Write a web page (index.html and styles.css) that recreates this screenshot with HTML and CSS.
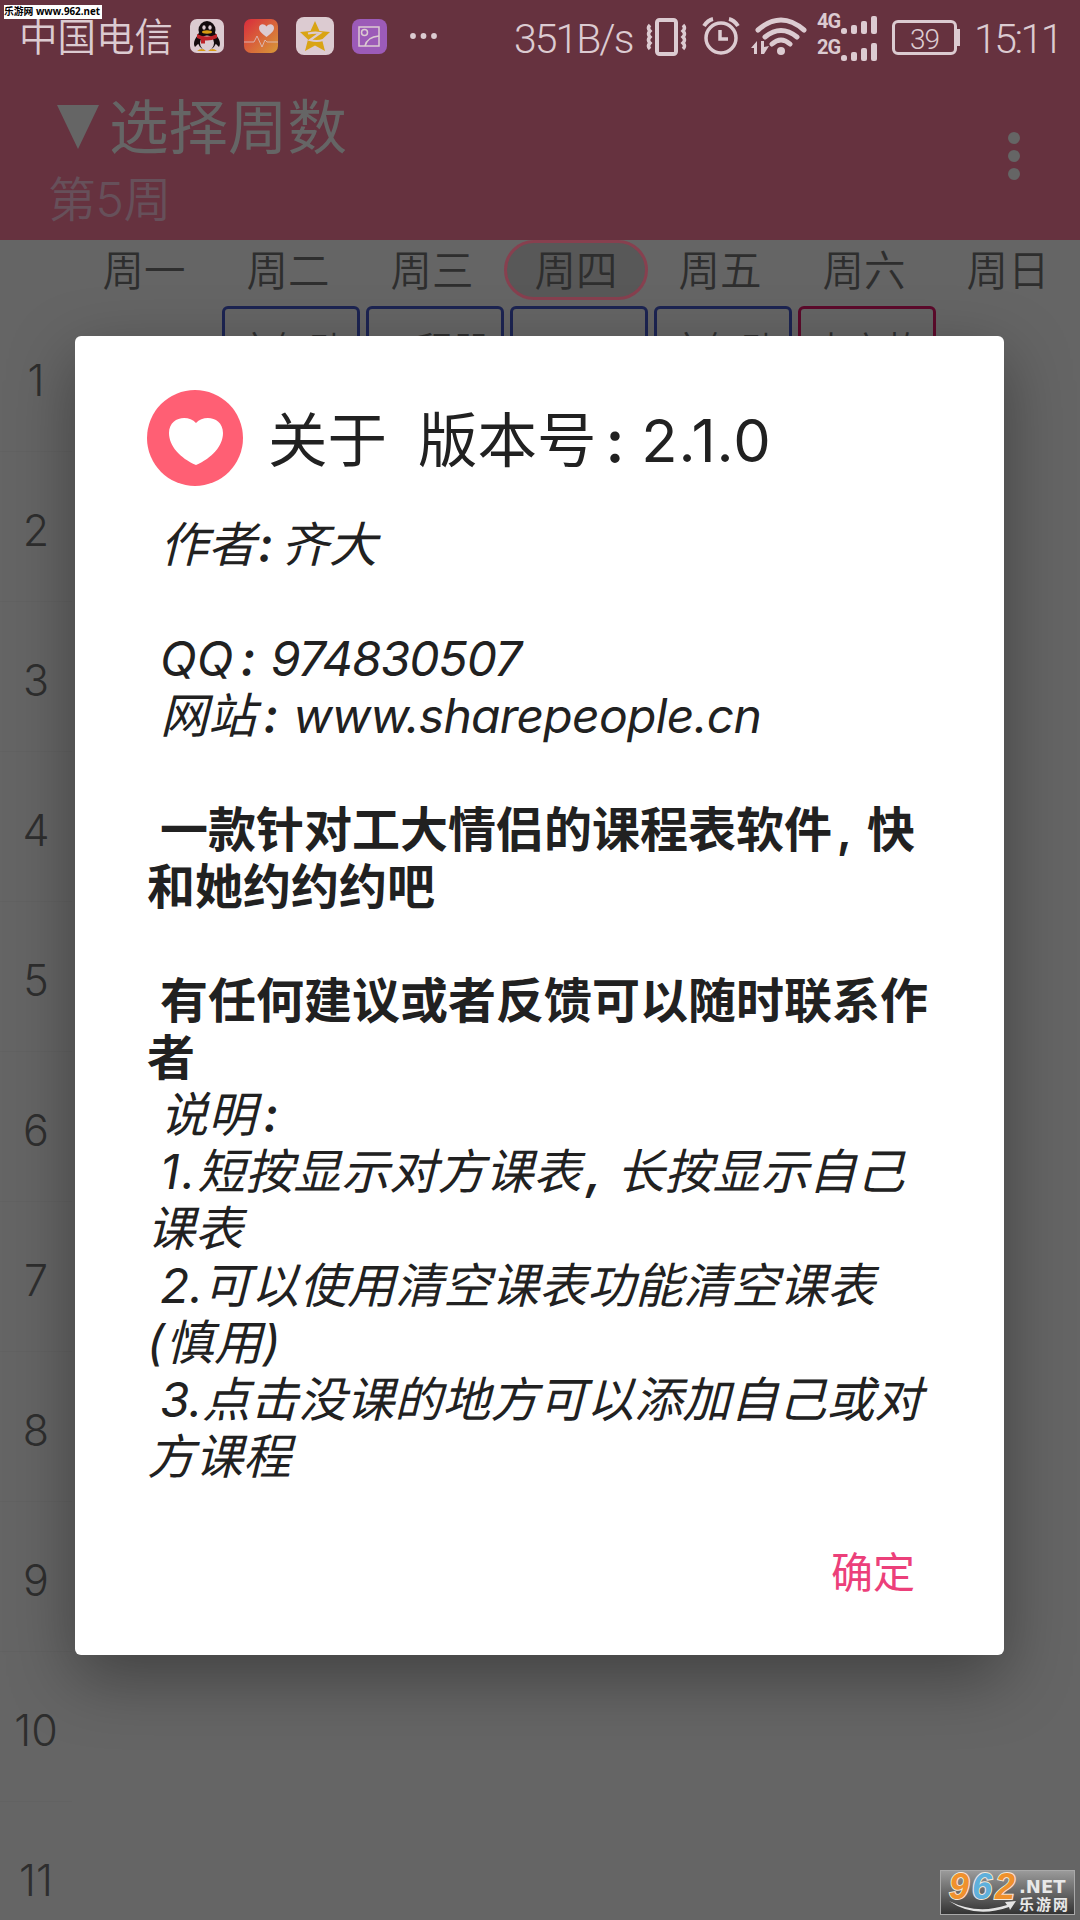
FILE: index.html
```
<!DOCTYPE html>
<html lang="zh-CN">
<head>
  <meta charset="utf-8">
  <title>课程表</title>
  <link rel="stylesheet" href="styles.css">
</head>
<body>
  <div class="screen">
    <div class="status-bar">
      <span class="carrier">中国电信</span>
      <div class="notifications">
        <svg class="app-icon" width="34" height="34" viewBox="0 0 34 34">
          <rect width="34" height="34" rx="7" fill="#dccbd1"/>
          <path d="M9 15C4 20 3 25 5 28l4-4zM25 15c5 5 6 10 4 13l-4-4z" fill="#130b0d"/>
          <ellipse cx="17" cy="20" rx="10" ry="11" fill="#130b0d"/>
          <ellipse cx="17" cy="11" rx="8.500" ry="9" fill="#130b0d"/>
          <ellipse cx="17" cy="24" rx="7" ry="7.500" fill="#dccbd1"/>
          <ellipse cx="14" cy="8.500" rx="1.700" ry="2.300" fill="#dccbd1"/>
          <ellipse cx="20" cy="8.500" rx="1.700" ry="2.300" fill="#dccbd1"/>
          <ellipse cx="17" cy="13" rx="5" ry="1.700" fill="#d99b13"/>
          <path d="M7 15q10 5 20 0v4q-6 3-12 2.500v3h-4v-4l-4-1.500z" fill="#bd2229"/>
          <path d="M7 32q5-4 9 0zM18 32q5-4 9 0z" fill="#d99b13"/>
        </svg>
        <svg class="app-icon" width="34" height="34" viewBox="0 0 34 34">
          <defs>
            <linearGradient id="health" x1="0" y1="0" x2="1" y2="1">
              <stop offset="0" stop-color="#d92b3c"/>
              <stop offset="1" stop-color="#d89a38"/>
            </linearGradient>
          </defs>
          <rect width="34" height="34" rx="7" fill="url(#health)"/>
          <path d="M22.500 18C17 14 15 11.500 15 9c0-4 5-5 7.500-1.500C25 4 30 5 30 9c0 2.500-2 5-7.500 9z" fill="#dccbd1"/>
          <path d="M0 23h10l3-6 5 11 3-7 2 2h11" fill="none" stroke="#dccbd1" stroke-opacity=".75" stroke-width="1"/>
        </svg>
        <svg class="app-icon qzone" width="38" height="38" viewBox="0 0 38 38">
          <rect width="38" height="38" rx="8" fill="#dccbd1"/>
          <path d="M19 4l4.500 10L34 15l-8 7.500L29 34l-10-5.500L9 34l3-11.500L4 15l10.500-1z" fill="#d9a414"/>
          <path d="M12 16.500q7-1.500 12-.5l-10 7q7 2 13 0" fill="none" stroke="#dccbd1" stroke-width="2.200"/>
        </svg>
        <svg class="app-icon" width="35" height="35" viewBox="0 0 35 35">
          <rect width="35" height="35" rx="8" fill="#9c5bb8"/>
          <g fill="none" stroke="#dccbd1" stroke-width="1.500">
            <rect x="7" y="8" width="20" height="19"/>
            <circle cx="12.500" cy="13.500" r="3"/>
            <path d="M13 27q2-9 14-10"/>
          </g>
        </svg>
        <svg class="more-dots" width="28" height="8" viewBox="0 0 28 8">
          <circle cx="4" cy="4" r="2.900"/><circle cx="14.500" cy="4" r="2.900"/><circle cx="25" cy="4" r="2.900"/>
        </svg>
      </div>
      <div class="indicators">
        <span class="speed">351B/s</span>
        <svg class="vibrate" width="42" height="40" viewBox="0 0 42 40" fill="none" stroke="#dccbd1">
          <rect x="11" y="4" width="19" height="34" rx="2.500" stroke-width="4"/>
          <path d="M4 9q-3 3 0 6q-3 3 0 6q-3 3 0 6q-3 3 0 6M37 9q3 3 0 6q3 3 0 6q3 3 0 6q3 3 0 6" stroke-width="3.500"/>
        </svg>
        <svg class="alarm" width="38" height="40" viewBox="0 0 38 40" fill="none" stroke="#dccbd1" stroke-width="3.500">
          <circle cx="19" cy="22" r="15"/>
          <path d="M18 14v9h8"/>
          <path d="M2 10q4-6 9-7M36 10q-4-6-9-7" stroke-width="4"/>
        </svg>
        <svg class="wifi" width="56" height="40" viewBox="0 0 56 40" fill="none" stroke="#dccbd1" stroke-width="5" stroke-linecap="round">
          <path d="M7 14q23-20 46 0M14 21q16-13 32 0M21 28q9-8 18 0"/>
          <circle cx="30" cy="35" r="4" fill="#dccbd1" stroke="none"/>
          <path d="M0 32l6-7v13h-3v-6zM10 25h3v6l5-1-5 8h-3z" fill="#dccbd1" stroke="none"/>
        </svg>
        <div class="sims">
          <div class="sim">
            <span>4G</span>
            <svg width="38" height="18" viewBox="0 0 38 18">
              <rect x="1" y="12" width="6" height="6" rx="2.500"/><rect x="11" y="9" width="6" height="9" rx="2"/><rect x="21" y="5" width="6" height="13" rx="2"/><rect x="31" y="0" width="6" height="18" rx="2"/>
            </svg>
          </div>
          <div class="sim">
            <span>2G</span>
            <svg class="second" width="38" height="18" viewBox="0 0 38 18">
              <rect x="1" y="12" width="6" height="6" rx="2.500"/><rect x="11" y="9" width="6" height="9" rx="2"/><rect x="21" y="5" width="6" height="13" rx="2"/><rect x="31" y="0" width="6" height="18" rx="2"/>
            </svg>
          </div>
        </div>
        <div class="battery">39</div>
        <span class="clock">15:11</span>
      </div>
    </div>

    <div class="toolbar">
      <div class="week-picker">
        <div class="week-title">
          <svg width="42" height="44" viewBox="0 0 42 44"><path d="M0 0h42L21 44z"/></svg>
          <span>选择周数</span>
        </div>
        <div class="week-current">第5周</div>
      </div>
      <svg class="overflow" width="12" height="50" viewBox="0 0 12 50">
        <circle cx="6" cy="7" r="6"/><circle cx="6" cy="25" r="6"/><circle cx="6" cy="43" r="6"/>
      </svg>
    </div>

    <div class="weekdays">
      <span class="day">周一</span>
      <span class="day">周二</span>
      <span class="day">周三</span>
      <span class="day today">周四</span>
      <span class="day">周五</span>
      <span class="day">周六</span>
      <span class="day">周日</span>
    </div>

    <div class="timetable">
      <div class="periods">
        <div>1</div><div>2</div><div>3</div><div>4</div><div>5</div><div>6</div>
        <div>7</div><div>8</div><div>9</div><div>10</div><div>11</div>
      </div>
      <div class="courses">
        <div class="slot"></div>
        <div class="slot"><div class="course">文气动</div></div>
        <div class="slot"><div class="course">工程器</div></div>
        <div class="slot"><div class="course"></div></div>
        <div class="slot"><div class="course">文气动</div></div>
        <div class="slot"><div class="course other">大六故</div></div>
        <div class="slot"></div>
      </div>
    </div>
  </div>

  <div class="dialog">
    <div class="dialog-header">
      <svg width="96" height="96" viewBox="0 0 96 96">
        <circle cx="48" cy="48" r="48" fill="#ff5f74"/>
        <path d="M49 75C33 68 22 56 22 43c0-16 19-19 27-10 8-9 27-6 27 10 0 13-11 25-27 32z" fill="#fff"/>
      </svg>
      <h1 class="dialog-title"><span>关于</span><span>版本号<i class="colon">:</i><span class="version">2.1.0</span></span></h1>
    </div>
    <div class="message">
      <p class="line indent">作者<i class="colon short">:</i>齐大</p>
      <p class="line"></p>
      <p class="line indent">QQ<i class="colon">:</i><span class="qq">974830507</span></p>
      <p class="line indent">网站<i class="colon">:</i><span class="site">www.sharepeople.cn</span></p>
      <p class="line"></p>
      <p class="line strong indent">一款针对工大情侣的课程表软件<i class="comma">,</i>快</p>
      <p class="line strong">和她约约约吧</p>
      <p class="line"></p>
      <p class="line strong indent">有任何建议或者反馈可以随时联系作</p>
      <p class="line strong">者</p>
      <p class="line indent">说明<i class="colon">:</i></p>
      <p class="line indent"><span class="first">1.</span>短按显示对方课表<i class="comma">,</i>长按显示自己</p>
      <p class="line">课表</p>
      <p class="line indent">2.可以使用清空课表功能清空课表</p>
      <p class="line note">(慎用)</p>
      <p class="line indent">3.点击没课的地方可以添加自己或对</p>
      <p class="line">方课程</p>
    </div>
    <div class="actions">
      <button class="confirm">确定</button>
    </div>
  </div>

  <div class="site-tag">乐游网 www.962.net</div>
  <div class="site-logo">
    <span class="logo-number"><b>9</b><b class="blue">6</b><b>2</b></span>
    <span class="logo-text"><span>.NET</span><span class="logo-name">乐游网</span></span>
    <svg class="swoosh" width="70" height="14" viewBox="0 0 70 14"><path d="M0 0q28 14 58 4l-2-3 11-1-6 9-1-3Q26 18 0 0z" fill="#e4e4e4"/></svg>
  </div>
</body>
</html>
```
FILE: styles.css
```
* {
  margin: 0;
  padding: 0;
  box-sizing: border-box;
}

body {
  width: 1080px;
  height: 1920px;
  overflow: hidden;
  position: relative;
  background: #656565;
  color: #2e2e2e;
  font-family: Inter, "Noto Sans CJK SC", sans-serif;
  font-weight: 350;
}

svg {
  display: block;
  flex: none;
}

.screen {
  height: 1920px;
  overflow: hidden;
}

/* Status bar */
.status-bar {
  height: 72px;
  padding: 0 22px 0 19px;
  display: flex;
  align-items: center;
  justify-content: space-between;
  background: #66323f;
  color: #dccbd1;
  font-family: Roboto, "Noto Sans CJK SC", sans-serif;
  white-space: nowrap;
}

.carrier {
  width: 154px;
  font-size: 38.500px;
  line-height: 72px;
  padding-top: 4px;
}

.notifications {
  display: flex;
  align-items: center;
  width: 325px;
  margin-left: 17px;
}

.app-icon {
  margin-right: 20px;
}

.app-icon.qzone {
  margin: 0 18px 0 -2px;
}

.more-dots {
  fill: #dccbd1;
  margin-left: 2px;
}

.indicators {
  display: flex;
  align-items: center;
  margin-left: auto;
}

.speed {
  width: 120px;
  margin-right: 12px;
  padding-top: 5px;
  font-size: 41px;
  letter-spacing: -2px;
}

.vibrate {
  margin-right: 14px;
}

.alarm {
  margin-right: 11px;
}

.wifi {
  margin-right: 10px;
}

.sims {
  height: 60px;
  width: 60px;
  margin-right: 15px;
  padding-top: 5px;
}

.sim {
  display: flex;
  height: 26px;
  fill: #dccbd1;
}

.sim span {
  width: 23px;
  font-size: 20px;
  line-height: 20px;
  font-weight: 700;
  letter-spacing: -1px;
}

.sim svg {
  margin-top: 5px;
}

.sim svg.second {
  margin-top: 6px;
}

.battery {
  width: 65px;
  height: 35px;
  border: 3px solid #dccbd1;
  border-radius: 6px;
  margin: 2px 17px 0 0;
  text-align: center;
  font-size: 28px;
  line-height: 33px;
  letter-spacing: -1px;
  position: relative;
}

.battery::after {
  content: '';
  position: absolute;
  right: -6px;
  top: 6px;
  width: 4px;
  height: 17px;
  background: #dccbd1;
}

.clock {
  width: 84px;
  padding-top: 5px;
  font-size: 41px;
  letter-spacing: -2.500px;
}

/* Toolbar */
.toolbar {
  height: 168px;
  padding: 19px 60px 0 48px;
  display: flex;
  justify-content: space-between;
  background: #66323f;
  color: #656565;
  fill: #656565;
}

.week-title {
  display: flex;
  align-items: center;
  gap: 10px;
  height: 72px;
  padding-left: 9px;
  font-size: 59.500px;
  font-weight: 400;
  line-height: 72px;
}

.week-title svg {
  margin-top: -1px;
}

.week-current {
  height: 72px;
  color: #66505a;
  font-size: 48px;
  line-height: 74px;
  letter-spacing: -0.500px;
}

.overflow {
  margin-top: 40px;
}

/* Timetable */
.weekdays {
  display: flex;
  height: 60px;
  padding-left: 72px;
}

.day {
  width: 144px;
  flex: none;
  text-align: center;
  font-size: 41.500px;
  line-height: 63px;
}

.day.today {
  line-height: 57px;
  border: 3px solid #87404f;
  border-radius: 30px;
  background: #585858;
}

.timetable {
  display: flex;
}

.periods {
  width: 72px;
  padding-top: 2px;
  flex: none;
}

.periods div {
  height: 150px;
  border-bottom: 1px solid #626262;
  text-align: center;
  font-size: 43px;
  line-height: 156px;
}

.courses {
  display: flex;
}

.slot {
  width: 144px;
  padding: 6px 0 6px 6px;
}

.course {
  height: 290px;
  border: 3px solid #1c2452;
  border-radius: 6px;
  text-align: center;
  font-size: 36px;
  line-height: 83px;
}

.course.other {
  border-color: #5c0a2b;
}

/* About dialog */
.dialog {
  position: absolute;
  left: 75px;
  top: 336px;
  width: 929px;
  height: 1319px;
  padding: 54px 72px 0;
  border-radius: 6px;
  background: #fff;
  color: #212121;
  font-weight: 400;
  box-shadow: 0 22px 66px rgba(0, 0, 0, 0.36);
}

.dialog-header {
  display: flex;
  align-items: center;
  height: 96px;
}

.dialog-title {
  display: flex;
  gap: 31px;
  margin-left: 25px;
  padding-top: 4px;
  font-size: 59.500px;
  font-weight: 400;
  line-height: 90px;
  white-space: nowrap;
}

.version {
  letter-spacing: 1px;
}

.colon,
.comma {
  display: inline-block;
  width: 0.78em;
  padding-left: 0.15em;
  font-style: inherit;
  font-weight: 600;
}

.dialog-title .colon {
  width: 0.75em;
}

.colon.short {
  width: 0.52em;
  padding-left: 0.04em;
}

.comma {
  width: 0.73em;
  padding-left: 0.1em;
}

.message {
  margin-top: 30px;
  font-size: 48px;
}

.line {
  height: 57px;
  line-height: 57px;
  font-style: italic;
  white-space: nowrap;
}

.line.indent {
  padding-left: 13px;
}

.line.strong {
  font-weight: 700;
  font-style: normal;
}

.line.note {
  letter-spacing: 0.800px;
}

.qq {
  letter-spacing: -1px;
}

.site {
  letter-spacing: -0.700px;
}

.first {
  letter-spacing: 2px;
}

.actions {
  display: flex;
  justify-content: flex-end;
  padding: 58px 17px 0 0;
}

.confirm {
  border: 0;
  background: none;
  color: #ec407a;
  font: inherit;
  font-size: 42px;
  line-height: 60px;
}

/* Site marks */
.site-tag {
  position: absolute;
  left: 4px;
  top: 5px;
  width: 98px;
  height: 14px;
  background: #fff;
  color: #000;
  font: 700 9.800px/14px "Open Sans", "Noto Sans CJK SC", sans-serif;
  white-space: nowrap;
}

.site-logo {
  position: absolute;
  left: 940px;
  top: 1870px;
  width: 135px;
  height: 45px;
  border: 1px solid #a9a9a9;
  background: linear-gradient(#9a9a9a, #343434);
  color: #e8e8e8;
  display: flex;
  padding: 1px 3px 0 8px;
}

.logo-number {
  width: 70px;
  font: italic 700 36px/30px "Liberation Sans", sans-serif;
  color: #f0912c;
  letter-spacing: 3px;
  -webkit-text-stroke: 2px #f4e8da;
  paint-order: stroke fill;
}

.logo-number .blue {
  color: #5fb0dc;
}

.logo-text {
  display: flex;
  flex-direction: column;
  font: 700 18px/17px "DejaVu Sans", sans-serif;
  padding-top: 6px;
}

.logo-name {
  font: 700 15px/17px "Noto Sans CJK SC", sans-serif;
  letter-spacing: 2px;
}

.swoosh {
  position: absolute;
  left: 8px;
  top: 30px;
}
```
